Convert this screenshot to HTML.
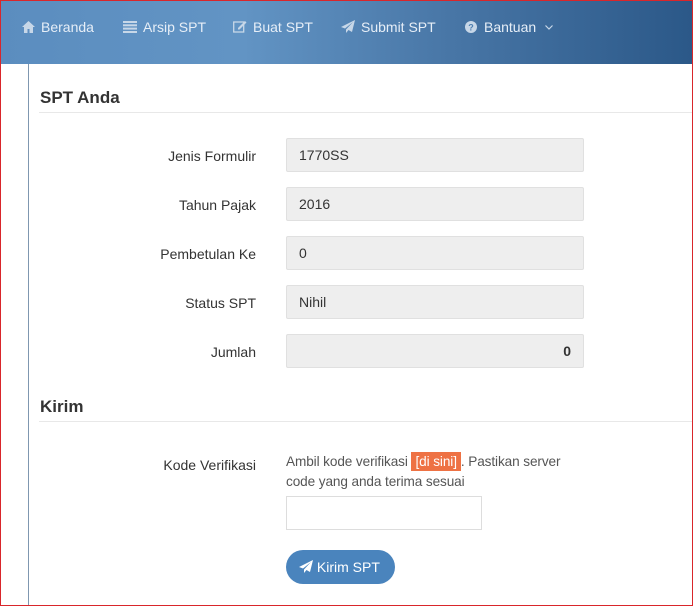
<!DOCTYPE html>
<html><head><meta charset="utf-8"><style>
*{box-sizing:border-box;margin:0;padding:0}
body{width:693px;height:606px;overflow:hidden;font-family:"Liberation Sans",sans-serif;background:#fff;position:relative;color:#333}
.frame{position:absolute;inset:0;border:1px solid #d9262b;pointer-events:none;z-index:5}
.nav{position:absolute;left:0;top:0;width:693px;height:64px;background:linear-gradient(90deg,#5b8dbf 0%,#6294c4 35%,#4876a6 65%,#2b5888 100%)}
.nav span{position:absolute;top:19px;font-size:14px;color:#e6eef7;white-space:nowrap}
.nav svg{margin-right:6px}
.vline{position:absolute;left:28px;top:64px;width:1px;height:542px;background:#7f97b0}
h3{position:absolute;left:40px;font-size:17px;font-weight:bold;color:#333}
.hr{position:absolute;left:39px;width:654px;height:1px;background:#e8e8e8}
.lbl{position:absolute;right:437px;font-size:14px;color:#333;text-align:right}
.box{position:absolute;left:286px;width:298px;height:34px;background:#eee;border:1px solid #e0e0e0;border-radius:2px;font-size:14px;padding:8px 12px;color:#333}
</style></head><body>
<div class="nav">
<span style="left:22px"><svg width="13" height="12" viewBox="0 0 13 12" style="vertical-align:-1px"><path d="M6.5 0L0 6h2v6h3.5V8h2v4H11V6h2z" fill="#c7d7e8"/></svg>Beranda</span>
<span style="left:123px"><svg width="14" height="12" viewBox="0 0 14 12" style="vertical-align:-1px" fill="#c7d7e8"><rect y="0" width="14" height="2"/><rect y="3.3" width="14" height="2"/><rect y="6.6" width="14" height="2"/><rect y="10" width="14" height="2"/></svg>Arsip SPT</span>
<span style="left:233px"><svg width="14" height="13" viewBox="0 0 14 13" style="vertical-align:-1px"><rect x="0.7" y="2" width="10" height="10" fill="none" stroke="#c7d7e8" stroke-width="1.3"/><path d="M5 8l7-7 1.5 1.5-7 7H5z" fill="#c7d7e8"/></svg>Buat SPT</span>
<span style="left:341px"><svg width="14" height="13" viewBox="0 0 14 13" style="vertical-align:-1px"><path d="M14 0L0 7l4 1.5L12 2 5 9.5V13l2.5-3 3.5 2z" fill="#c7d7e8"/></svg>Submit SPT</span>
<span style="left:465px"><svg width="12" height="12" viewBox="0 0 12 12" style="vertical-align:-1px;margin-right:7px"><circle cx="6" cy="6" r="6" fill="#c7d7e8"/><text x="6" y="9.5" font-size="9" font-weight="bold" text-anchor="middle" fill="#4f80b1" font-family="Liberation Sans">?</text></svg>Bantuan</span>
<svg style="position:absolute;left:545px;top:25px" width="8" height="5" viewBox="0 0 8 5"><path d="M0.5 0.5L4 4 7.5 0.5" fill="none" stroke="#c7d7e8" stroke-width="1.2"/></svg>
</div>
<div class="vline"></div>
<h3 style="top:88px">SPT Anda</h3>
<div class="hr" style="top:112px"></div>
<div class="lbl" style="top:148px">Jenis Formulir</div><div class="box" style="top:138px">1770SS</div>
<div class="lbl" style="top:197px">Tahun Pajak</div><div class="box" style="top:187px">2016</div>
<div class="lbl" style="top:246px">Pembetulan Ke</div><div class="box" style="top:236px">0</div>
<div class="lbl" style="top:295px">Status SPT</div><div class="box" style="top:285px">Nihil</div>
<div class="lbl" style="top:344px">Jumlah</div><div class="box" style="top:334px;text-align:right;font-weight:bold">0</div>
<h3 style="top:397px">Kirim</h3>
<div class="hr" style="top:421px"></div>
<div class="lbl" style="top:457px">Kode Verifikasi</div>
<div style="position:absolute;left:286px;top:452px;width:300px;font-size:13.6px;line-height:20px;color:#555;letter-spacing:-0.1px">Ambil kode verifikasi <span style="background:#ee7244;color:#fff;padding:2px 4px">[di sini]</span>. Pastikan server code yang anda terima sesuai</div>
<div style="position:absolute;left:286px;top:496px;width:196px;height:34px;border:1px solid #ddd"></div>
<div style="position:absolute;left:286px;top:550px;width:109px;height:34px;border-radius:17px;background:#4a84bd;color:#fff;font-size:14px;padding-top:9px;padding-left:13px"><svg width="14" height="13" viewBox="0 0 14 13" style="vertical-align:-1px"><path d="M14 0L0 7l4 1.5L12 2 5 9.5V13l2.5-3 3.5 2z" fill="#fff"/></svg> Kirim SPT</div>
<div class="frame"></div>
</body></html>
